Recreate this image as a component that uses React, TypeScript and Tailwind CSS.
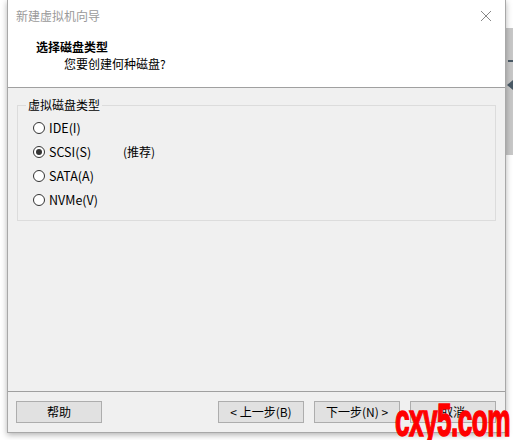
const options = [
  { label: "IDE(I)", checked: false, note: "" },
  { label: "SCSI(S)", checked: true, note: "(推荐)" },
  { label: "SATA(A)", checked: false, note: "" },
  { label: "NVMe(V)", checked: false, note: "" },
];

const buttons = ["< 上一步(B)", "下一步(N) >", "取消"];

const Radio = ({ checked }: { checked: boolean }) => (
  <span className="w-[12px] h-[12px] rounded-full border border-[#333] bg-white flex items-center justify-center shrink-0">
    {checked && <span className="w-[6px] h-[6px] rounded-full bg-[#333]"></span>}
  </span>
);

const App = () => {
  return (
    <div className="relative w-[513px] h-[440px] overflow-hidden bg-white font-['Noto_Sans_CJK_SC','Microsoft_YaHei',sans-serif] text-[12px] text-black">
      {/* window behind the dialog */}
      <div className="absolute left-[506px] top-[28px] w-[7px] h-[127px] bg-[#c8c8c8]">
        <div className="mt-[32px] ml-[2px] w-[5px] h-[2px] bg-[#4a5a66]"></div>
        <div className="mt-[18px] ml-[1px] w-0 h-0 border-y-[5px] border-y-transparent border-r-[6px] border-r-[#4a5a66]"></div>
      </div>
      <div className="absolute left-[195px] top-0 flex gap-[6px]">
        {[14, 8, 20, 10, 6, 16, 12, 22, 9, 14, 18, 8, 12, 20, 10, 14].map((w, i) => (
          <span key={i} className="h-[2px] bg-[#333]" style={{ width: w }}></span>
        ))}
      </div>

      {/* dialog */}
      <div className="absolute left-[7px] top-0 w-[499px] h-[433px] flex flex-col bg-[#f0f0f0] border-x border-b border-[#a8a8a8] shadow-[0_2px_6px_rgba(0,0,0,0.3)]">
        <div className="bg-white h-[88px] border-b border-[#a0a0a0] flex flex-col">
          <div className="h-[31px] flex items-center justify-between pl-[8px] pr-[10px]">
            <span className="text-[#9a9a9a]">新建虚拟机向导</span>
            <svg width="12" height="12" viewBox="0 0 12 12" className="mr-[3px]">
              <path d="M1 1L11 11M11 1L1 11" stroke="#888" strokeWidth="1" fill="none" />
            </svg>
          </div>
          <div className="pl-[28px] font-bold leading-[16px] mt-[8px]">选择磁盘类型</div>
          <div className="pl-[56px] leading-[16px] mt-[1px]">您要创建何种磁盘?</div>
        </div>

        <div className="flex-1 px-[9px] pt-[17px]">
          <div className="relative h-[116px] border border-[#dcdcdc] px-[15px] pt-[14px]">
            <span className="absolute left-[8px] top-[-9px] px-[2px] bg-[#f0f0f0] leading-[16px]">虚拟磁盘类型</span>
            <div className="flex flex-col gap-[8px]">
              {options.map((o) => (
                <div key={o.label} className="flex items-center h-[16px]">
                  <Radio checked={o.checked} />
                  <span className="ml-[4px] w-[74px] text-[12.5px]">{o.label}</span>
                  <span>{o.note}</span>
                </div>
              ))}
            </div>
          </div>
        </div>

        <div className="border-t border-[#a0a0a0] h-[41px] flex items-start pt-[9px] px-[8px]">
          <button className="w-[86px] h-[22px] bg-[#e1e1e1] border border-[#adadad]">帮助</button>
          <div className="ml-auto flex gap-[10px] mr-[1px]">
            {buttons.map((b) => (
              <button key={b} className="w-[86px] h-[22px] bg-[#e1e1e1] border border-[#adadad]">
                {b}
              </button>
            ))}
          </div>
        </div>
      </div>

      {/* watermark */}
      <div className="absolute left-[395px] top-[397px] origin-left scale-x-[0.57] text-[#ff0000] font-['Liberation_Sans',sans-serif] font-bold text-[46px] leading-none tracking-[-1px] whitespace-nowrap [-webkit-text-stroke:1.5px_#ff0000]">
        cxy5.com
      </div>
    </div>
  );
};

export default App;
